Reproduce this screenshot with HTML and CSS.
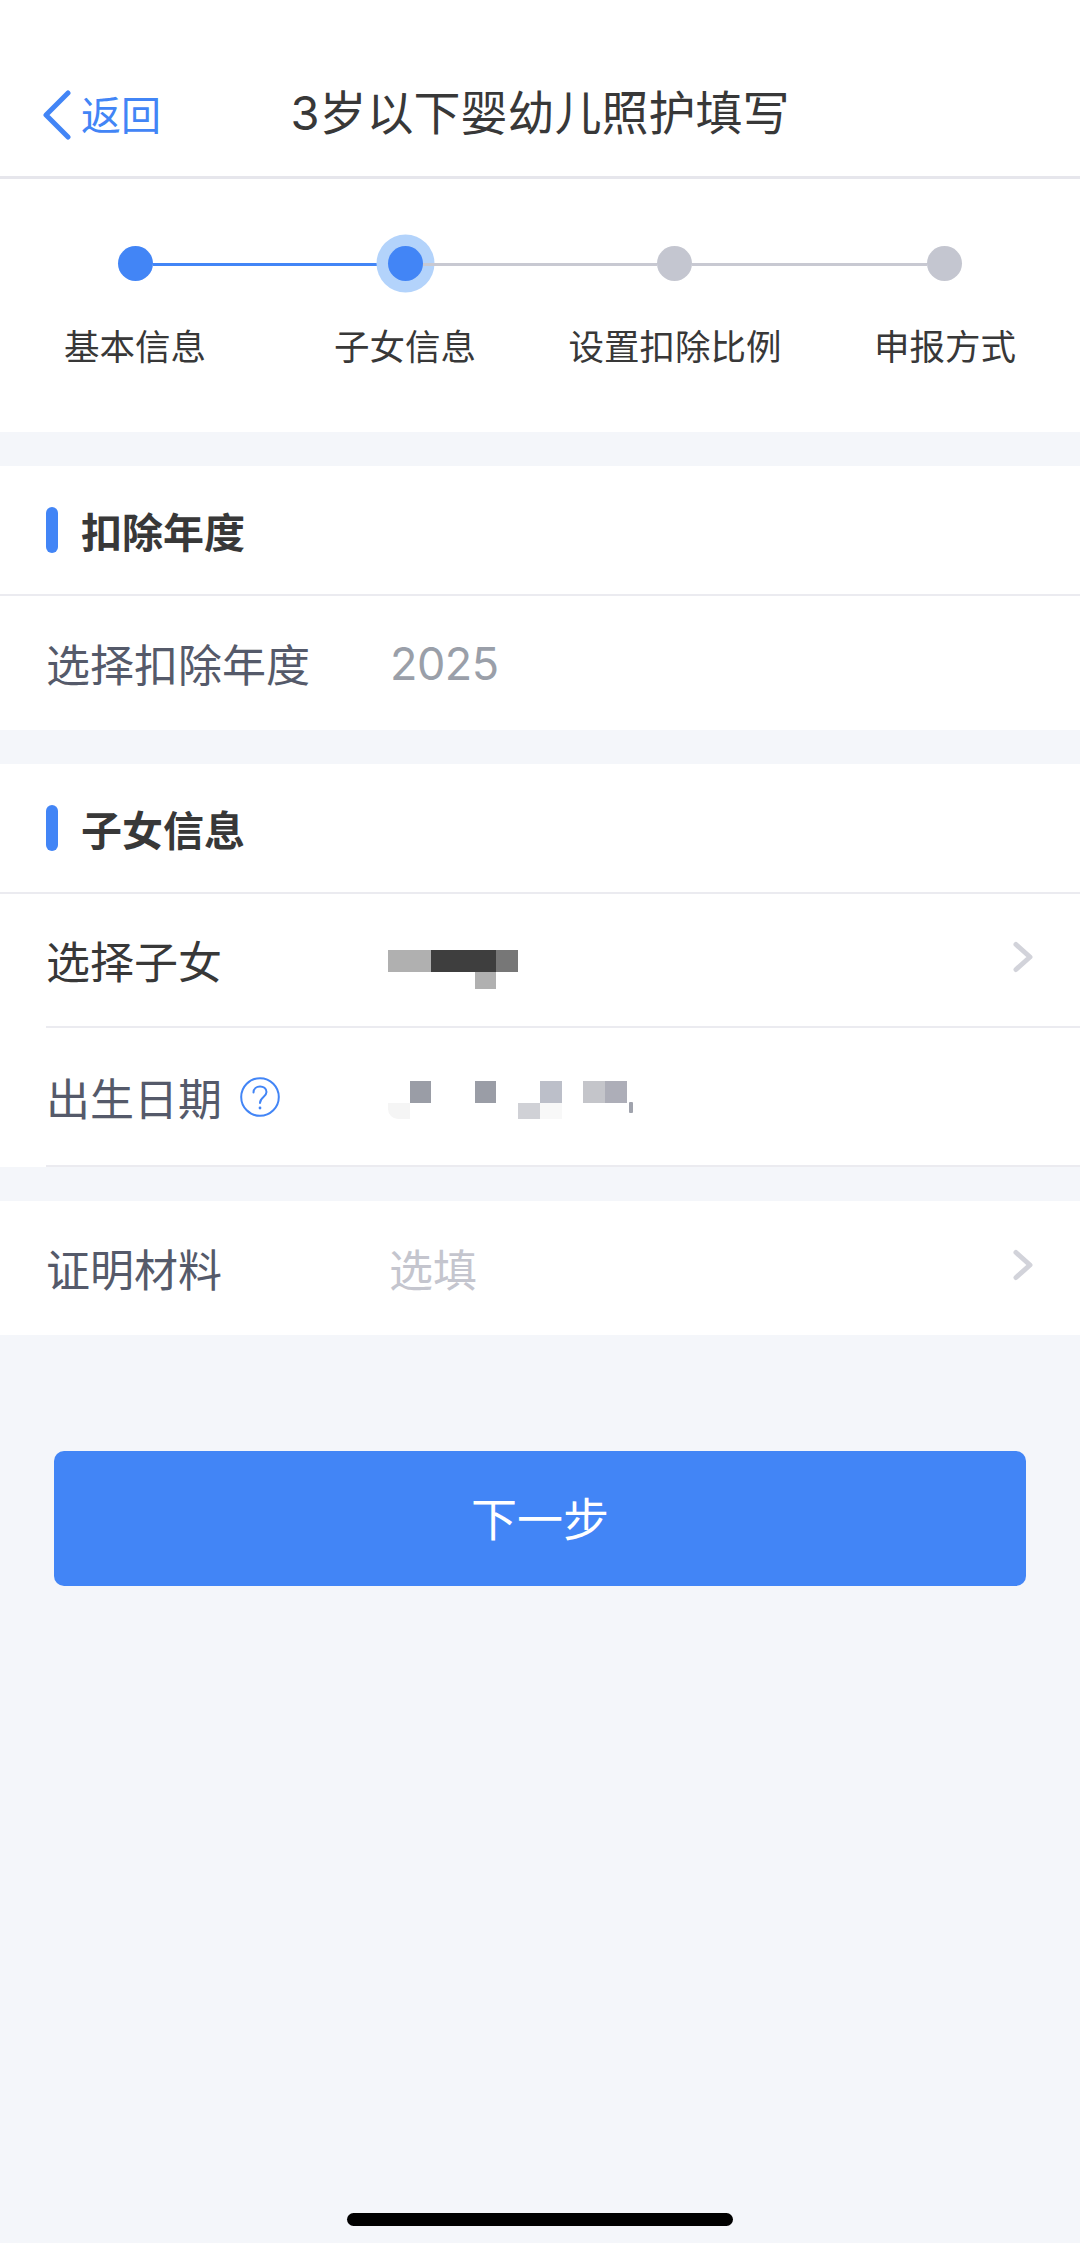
FILE: index.html
```html
<!DOCTYPE html>
<html lang="zh-CN">
<head>
  <meta charset="UTF-8">
  <title>3岁以下婴幼儿照护填写</title>
  <link rel="stylesheet" href="styles.css">
</head>
<body>
  <div class="page">
    <header class="nav">
      <a class="back">
        <svg class="back-icon" width="30" height="50" viewBox="0 0 30 50"><path d="M26 3 L4 25 L26 47"/></svg>
        <span>返回</span>
      </a>
      <h1>3岁以下婴幼儿照护填写</h1>
    </header>

    <section class="steps">
      <div class="track">
        <span class="dot on"></span>
        <span class="link on"></span>
        <span class="dot on current"></span>
        <span class="link"></span>
        <span class="dot"></span>
        <span class="link"></span>
        <span class="dot"></span>
      </div>
      <div class="step-labels">
        <span>基本信息</span>
        <span>子女信息</span>
        <span>设置扣除比例</span>
        <span>申报方式</span>
      </div>
    </section>

    <section class="card">
      <div class="card-head">扣除年度</div>
      <div class="row">
        <span class="label">选择扣除年度</span>
        <span class="value year">2025</span>
      </div>
    </section>

    <section class="card">
      <div class="card-head">子女信息</div>
      <div class="row inset">
        <span class="label dark">选择子女</span>
        <div class="mosaic name">
          <i class="m1"></i><i class="m1"></i><i class="m2"></i><i class="m2"></i><i class="m2"></i><i class="m3"></i>
          <i></i><i></i><i></i><i></i><i class="m1"></i><i></i>
        </div>
        <svg class="arrow" width="24" height="36" viewBox="0 0 24 36"><path d="M4 5.5 L18 18 L4 30.5"/></svg>
      </div>
      <div class="row inset">
        <span class="label">出生日期
          <svg class="help" width="40" height="40" viewBox="0 0 40 40">
            <circle cx="20" cy="20" r="18.8"/>
            <path d="M13.5 15.5 C13.5 7.5 26.5 7.5 26.5 15 C26.5 20 20 20 20 26"/>
            <circle class="help-dot" cx="20" cy="31" r="1.4"/>
          </svg>
        </span>
        <div class="mosaic date">
          <i></i><i class="m4"></i><i></i><i></i><i class="m4"></i><i></i><i></i><i class="m5"></i><i></i><i class="m6"></i><i class="m7"></i>
          <i class="m8"></i><i></i><i></i><i></i><i></i><i></i><i class="m9"></i><i class="m10"></i><i></i><i></i><i></i>
          <b class="sliver"></b>
        </div>
      </div>
    </section>

    <section class="card">
      <div class="row">
        <span class="label">证明材料</span>
        <span class="value hint">选填</span>
        <svg class="arrow" width="24" height="36" viewBox="0 0 24 36"><path d="M4 5.5 L18 18 L4 30.5"/></svg>
      </div>
    </section>

    <button class="next">下一步</button>

    <div class="home-bar"></div>
  </div>
</body>
</html>
```

FILE: styles.css
```css
* {
  box-sizing: border-box;
}
body {
  margin: 0;
  background: #f4f6fa;
  font-family: "Inter", "Noto Sans CJK SC", sans-serif;
  color: #383838;
}
.page {
  display: flex;
  flex-direction: column;
  height: 2243px;
  overflow: hidden;
}

/* top bar */
.nav {
  position: relative;
  display: flex;
  align-items: center;
  justify-content: center;
  height: 179px;
  padding: 66px 0 16px;
  background: #fff;
  border-bottom: 3px solid #e6e6ec;
}
.nav h1 {
  margin: 0;
  font-size: 47px;
  font-weight: 400;
  line-height: 94px;
}
.back {
  position: absolute;
  left: 42px;
  top: 88px;
  display: flex;
  align-items: center;
  gap: 9px;
  color: #4285f6;
  font-size: 40px;
  line-height: 50px;
}
.back span {
  padding-top: 3px;
}
.back-icon path {
  fill: none;
  stroke: #4285f6;
  stroke-width: 5;
  stroke-linecap: round;
  stroke-linejoin: round;
}

/* progress */
.steps {
  height: 253px;
  padding-top: 67px;
  background: #fff;
}
.track {
  display: flex;
  align-items: center;
  margin: 0 118px;
}
.dot {
  flex: none;
  width: 35px;
  height: 35px;
  border-radius: 50%;
  background: #c4c6d0;
}
.dot.on {
  background: #4285f6;
}
.dot.current {
  box-shadow: 0 0 0 11.5px #b3d3fb;
}
.link {
  flex: 1;
  height: 3px;
  margin-top: 2px;
  background: #c8c9d2;
}
.link.on {
  background: #4285f6;
}
.step-labels {
  display: grid;
  grid-template-columns: repeat(4, 270px);
  margin-top: 42px;
  font-size: 35.5px;
  line-height: 50px;
  text-align: center;
}

/* form cards */
.card {
  margin-top: 34px;
  background: #fff;
}
.card-head {
  position: relative;
  height: 130px;
  padding-left: 81px;
  font-size: 41px;
  font-weight: 700;
  line-height: 134px;
  border-bottom: 2px solid #ebebf0;
}
.card-head::before {
  content: "";
  position: absolute;
  left: 46px;
  top: 41px;
  width: 12px;
  height: 46px;
  border-radius: 6px;
  background: #4285f6;
}
.row {
  position: relative;
  display: flex;
  align-items: center;
  height: 134px;
  padding-left: 46px;
}
.row.inset {
  height: 134px;
  padding-left: 0;
  margin-left: 46px;
  border-bottom: 2px solid #ebebf0;
}
.row.inset:nth-child(3) {
  height: 139px;
}
.label {
  display: flex;
  align-items: center;
  gap: 18px;
  width: 344px;
  font-size: 44px;
  color: #555a6a;
  white-space: nowrap;
}
.label.dark {
  color: #383838;
}
.value {
  font-size: 44px;
}
.year {
  color: #9a9fa9;
  font-size: 45px;
  letter-spacing: -0.5px;
}
.hint {
  margin-left: -1px;
  color: #c4c5ce;
}
.arrow {
  position: absolute;
  right: 44px;
  top: 50%;
  margin-top: -21px;
}
.arrow path {
  fill: none;
  stroke: #d2d3da;
  stroke-width: 5;
  stroke-linecap: round;
  stroke-linejoin: round;
}
.help circle {
  fill: none;
  stroke: #4285f6;
  stroke-width: 2;
}
.help path {
  fill: none;
  stroke: #4285f6;
  stroke-width: 2;
  stroke-linecap: round;
}
.help .help-dot {
  fill: #4285f6;
  stroke: none;
}

/* pixelated values */
.mosaic {
  position: relative;
  display: grid;
  grid-template-columns: repeat(var(--cols), 21.7px);
}
.mosaic.name {
  --cols: 6;
  grid-template-rows: 22px 17px;
  margin-top: 19px;
  margin-left: -2px;
}
.mosaic.date {
  --cols: 11;
  grid-template-rows: 22px 16px;
  margin-top: 6px;
  margin-left: -2px;
}
.m1 { background: #b0b0b0; }
.m2 { background: #3e3e3e; }
.m3 { background: #777; }
.m4 { background: #9a9da6; }
.m5 { background: #bcbfc9; }
.m6 { background: #c4c5ca; }
.m7 { background: #adaeb8; }
.m8 { background: #f5f5f5; border-bottom-left-radius: 10px; }
.m9 { background: #d0d1d6; }
.m10 { background: #f8f8f8; }
.sliver {
  position: absolute;
  left: 241px;
  top: 21px;
  width: 4px;
  height: 11px;
  border-radius: 1px;
  background: #a0a3ad;
}

/* actions */
.next {
  display: block;
  width: 972px;
  height: 135px;
  margin: 116px 0 0 54px;
  padding: 0 0 6px;
  border: none;
  border-radius: 10px;
  background: #4285f6;
  color: #fff;
  font-family: inherit;
  font-size: 46px;
}
.home-bar {
  width: 386px;
  height: 13px;
  margin: auto auto 17px;
  border-radius: 7px;
  background: #000;
}
```
